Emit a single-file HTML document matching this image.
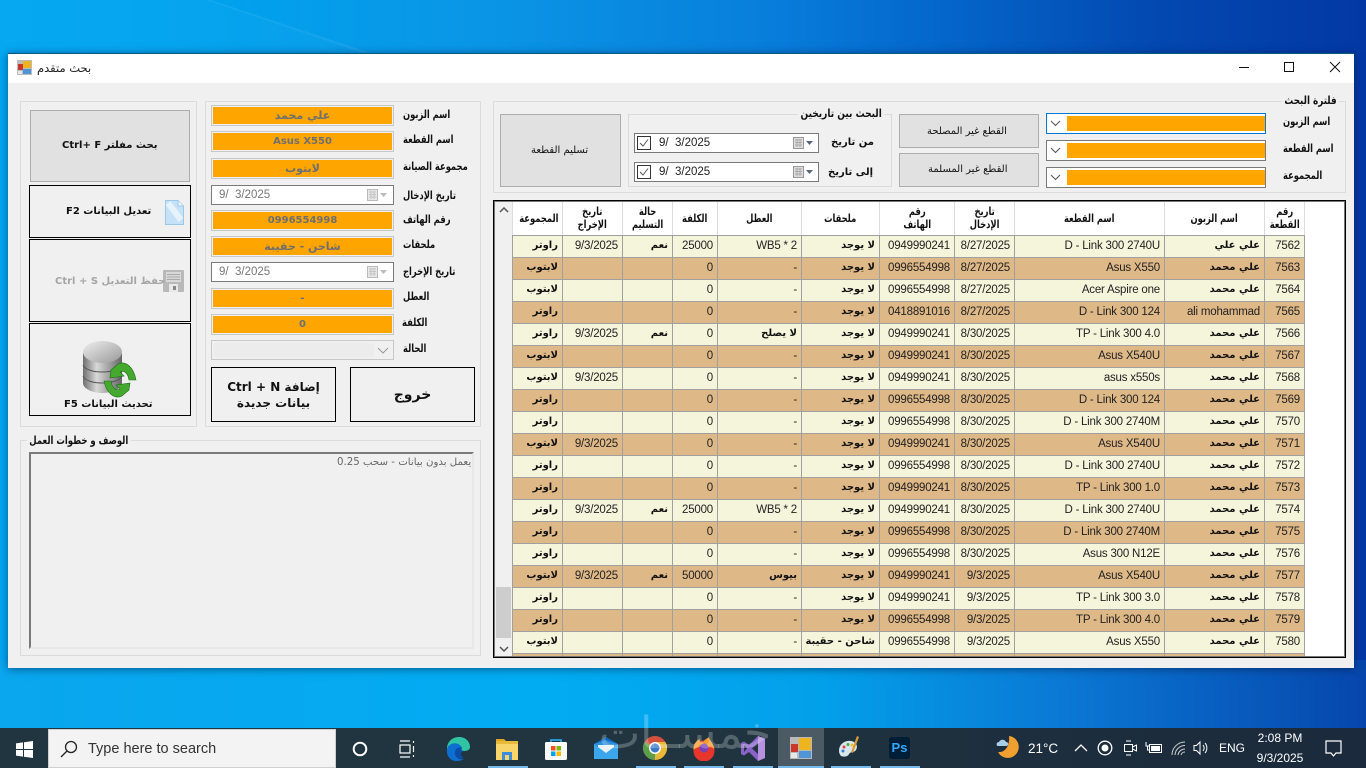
<!DOCTYPE html>
<html lang="ar"><head><meta charset="utf-8"><title>بحث متقدم</title>
<style>
*{box-sizing:border-box}
html,body{margin:0;padding:0;width:1366px;height:768px;overflow:hidden;background:#0a8ae0;font-family:"Liberation Sans","DejaVu Sans",sans-serif}
.a{position:absolute;white-space:nowrap}
.ar{font-family:"DejaVu Sans","Liberation Sans",sans-serif;font-size:10px;font-weight:bold;color:#111;direction:rtl;line-height:14px}
.l{font-size:11px;transform:scaleX(.76);transform-origin:0 50%}
.gb{position:absolute;border:1px solid #dbdbdb}
.leg{position:absolute;background:#f0f0f0;padding:0 3px;white-space:nowrap;font-size:11px;transform-origin:0 50%}
.fld{position:absolute;left:211px;width:183px;height:21px;border:1px solid #c8c8c8;background:#f0f0f0;padding:1px}
.fld div{background:#ffa500;height:100%;margin:0;text-align:center;color:#6f6f6f;font-weight:bold;font-size:11px;line-height:17px;font-family:"DejaVu Sans","Liberation Sans",sans-serif}
.fld div.n{font-size:10px}
.dtd{position:absolute;left:211px;width:183px;height:20px;border:1px solid #7a7a7a;background:#fff;color:#777;font-size:11.5px;line-height:18px;padding-left:7px;white-space:pre}
.dt{position:absolute;left:634px;width:185px;height:20px;border:1px solid #7a7a7a;background:#fff;color:#222;font-size:11.5px;line-height:18px;white-space:pre}
.btn{position:absolute;background:#e1e1e1;border:1px solid #adadad}
.bb{position:absolute;border:1px solid #000;background:#f0f0f0}
.cb{position:absolute;left:1046px;width:220px;height:21px;border:1px solid #7a7a7a;background:#fff}
.cb i{position:absolute;left:20px;right:0;top:2px;bottom:2px;background:#ffa500}
table{position:absolute;left:512px;top:202px;border-collapse:collapse;table-layout:fixed;width:792px;font-size:11.5px;color:#222;letter-spacing:-.2px}
td{border:1px solid #a0a0a0;height:22px;padding:0 4px 0 0;text-align:right;overflow:hidden;white-space:nowrap;line-height:20px}
td.r,td.c,td.s{font-family:"DejaVu Sans","Liberation Sans",sans-serif;font-size:10px;font-weight:bold;color:#111;letter-spacing:0}
tr.y td{background:#f5f5dc}
tr.b td{background:#deb887}
th{background:#fff;border:1px solid #dcdcdc;border-bottom:1px solid #a0a0a0;border-top:0;height:33px;padding:0;font-family:"DejaVu Sans",sans-serif;font-size:11px;font-weight:bold;color:#111;line-height:13px;text-align:center;letter-spacing:0}
th span{display:inline-block;transform:scaleX(.76);white-space:nowrap}
.tb{color:#fff;font-size:12px}
.u{position:absolute;top:766px;height:2px;background:#76b9ed}
</style></head><body>

<!-- wallpaper -->
<div class="a" style="left:0;top:0;width:1366px;height:730px;background:linear-gradient(90deg,#00a6f2 0,#00a2ee 15%,#0a96e6 35%,#0880dc 55%,#0468cc 68%,#0348b0 85%,#0338a4 100%)"></div>
<svg class="a" style="left:0;top:0" width="400" height="56"><polygon points="0,0 206,0 375,56 0,56" fill="#ffffff" opacity=".025"/><polygon points="206,0 211,0 380,56 372,56" fill="#ffffff" opacity=".07"/></svg>
<div class="a" style="left:0;top:660px;width:1366px;height:70px;background:linear-gradient(90deg,#0aa6ee 0,#02acf2 40%,#03a0ea 60%,#0a78d4 78%,#0646ac 100%)"></div>

<!-- window -->
<div class="a" style="left:8px;top:53px;width:1346px;height:615px;background:#f0f0f0;border-top:1px solid #0a5a80;box-shadow:0 1px 8px rgba(0,20,60,.55)">
<div class="a" style="left:0;top:0;width:1346px;height:29px;background:#fff"></div>
</div>

<!-- title -->
<svg class="a" style="left:17px;top:60px" width="15" height="15" viewBox="0 0 15 15"><rect x="0" y="0" width="15" height="15" fill="#bdbdbd"/><rect x="1" y="4" width="5" height="6" fill="#c9372c"/><rect x="6" y="1" width="8" height="7" fill="#eeb420"/><rect x="6" y="9" width="8" height="5" fill="#4f95d8"/><rect x="1" y="11" width="4" height="3" fill="#e8e8e8"/></svg>
<div class="a ar" style="left:37px;top:61px;font-weight:normal;font-size:11.5px;color:#222">بحث متقدم</div>
<svg class="a" style="left:1230px;top:56px" width="120" height="24" viewBox="0 0 120 24" fill="none" stroke="#111" stroke-width="1"><path d="M9 11.5H19"/><rect x="54.5" y="6.5" width="9" height="9"/><path d="M100 6L110 16M110 6L100 16"/></svg>

<!-- left group -->
<div class="gb" style="left:20px;top:101px;width:177px;height:326px"></div>
<div class="btn" style="left:30px;top:110px;width:160px;height:72px;border-width:1.5px"></div>
<div class="a ar" style="left:62px;top:139px;direction:rtl">بحث مفلتر Ctrl+ F</div>

<div class="bb" style="left:29px;top:185px;width:162px;height:53px"></div>
<svg class="a" style="left:165px;top:200px" width="19" height="25" viewBox="0 0 19 25"><path d="M.5 .5H13L18.5 6V24.5H.5Z" fill="#c6e2f7" stroke="#9cc8e8"/><path d="M3 3L16 20" stroke="#e6f3fc" stroke-width="6"/><path d="M13 .5V6H18.5" fill="#eaf5fd" stroke="#9cc8e8"/></svg>
<div class="a ar" style="left:66px;top:205px">تعديل البيانات F2</div>

<div class="bb" style="left:29px;top:239px;width:162px;height:83px"></div>
<svg class="a" style="left:163px;top:270px" width="21" height="22" viewBox="0 0 21 22"><rect width="21" height="22" rx="1" fill="#b9b9b9"/><rect x="3" y="2" width="15" height="10" fill="#d8d8d8"/><path d="M4 4.500H17M4 7H17M4 9.500H17" stroke="#aaa"/><rect x="6" y="14" width="9" height="8" fill="#e8e8e8"/><rect x="10" y="16" width="3" height="4" fill="#888"/></svg>
<div class="a ar" style="left:55px;top:275px;color:#a5a5a5">حفظ التعديل Ctrl + S</div>

<div class="bb" style="left:29px;top:323px;width:162px;height:93px"></div>
<svg class="a" style="left:82px;top:340px" width="56" height="62" viewBox="0 0 56 62">
<defs><linearGradient id="g" x1="0" x2="1"><stop offset="0" stop-color="#6e6e6e"/><stop offset=".35" stop-color="#d8d8d8"/><stop offset="1" stop-color="#666"/></linearGradient><linearGradient id="t" x1="0" x2="1" y1="0" y2="1"><stop offset="0" stop-color="#eee"/><stop offset="1" stop-color="#999"/></linearGradient></defs>
<path d="M1 13V43C1 49 11 53 20 53S40 49 40 43V13Z" fill="url(#g)"/>
<path d="M1 25C3 30 12 32 20 32S38 30 40 25M1 36C3 41 12 43 20 43S38 41 40 36" stroke="#555" fill="none"/>
<ellipse cx="20.500" cy="12" rx="19.500" ry="11" fill="url(#t)"/>
<path d="M29 30L36 24C44 20 52 28 54 40L47 40C46 33 42 30 38 32L42 36L28 38Z" fill="#45a82f" stroke="#1e6d19" stroke-width=".6"/>
<path d="M47 50L40 56C32 60 24 52 22 41L29 41C30 48 34 51 38 49L34 45L48 43Z" fill="#45a82f" stroke="#1e6d19" stroke-width=".6"/>
</svg>
<div class="a ar" style="left:64px;top:398px">تحديث البيانات F5</div>

<!-- middle group -->
<div class="gb" style="left:205px;top:101px;width:276px;height:326px"></div>
<div class="fld" style="top:105px"><div>علي محمد</div></div>
<div class="fld" style="top:131px"><div class="n">Asus X550</div></div>
<div class="fld" style="top:158px"><div>لابتوب</div></div>
<div class="dtd" style="top:185px">9/  3/2025<svg class="a" style="left:155px;top:3px" width="24" height="12" viewBox="0 0 24 12"><rect x=".5" y=".5" width="10" height="11" fill="#e8e8e8" stroke="#bbb"/><path d="M2 3H9M2 5.500H9M2 8H9M4 2V10M7 2V10" stroke="#c4c4c4"/><path d="M13 4H20L16.500 8Z" fill="#bbb"/></svg></div>
<div class="fld" style="top:210px"><div class="n">0996554998</div></div>
<div class="fld" style="top:236px"><div>شاحن - حقيبة</div></div>
<div class="dtd" style="top:262px">9/  3/2025<svg class="a" style="left:155px;top:3px" width="24" height="12" viewBox="0 0 24 12"><rect x=".5" y=".5" width="10" height="11" fill="#e8e8e8" stroke="#bbb"/><path d="M2 3H9M2 5.500H9M2 8H9M4 2V10M7 2V10" stroke="#c4c4c4"/><path d="M13 4H20L16.500 8Z" fill="#bbb"/></svg></div>
<div class="fld" style="top:288px"><div class="n">-</div></div>
<div class="fld" style="top:314px"><div class="n">0</div></div>
<div class="fld" style="top:340px;height:20px"><div style="background:#ececec;width:160px;margin:1px 0 0 1px;height:14px"></div><svg class="a" style="left:165px;top:6px" width="12" height="7" viewBox="0 0 12 7" fill="none" stroke="#999"><path d="M1 1L6 6L11 1"/></svg></div>

<div class="a ar l" style="left:403px;top:108px">اسم الزبون</div>
<div class="a ar l" style="left:403px;top:133px">اسم القطعة</div>
<div class="a ar l" style="left:403px;top:160px">مجموعة الصيانة</div>
<div class="a ar l" style="left:403px;top:189px">تاريخ الإدخال</div>
<div class="a ar l" style="left:403px;top:213px">رقم الهاتف</div>
<div class="a ar l" style="left:403px;top:238px">ملحقات</div>
<div class="a ar l" style="left:403px;top:265px">تاريخ الإخراج</div>
<div class="a ar l" style="left:403px;top:290px">العطل</div>
<div class="a ar l" style="left:402px;top:316px">الكلفة</div>
<div class="a ar l" style="left:403px;top:342px">الحالة</div>

<div class="bb" style="left:211px;top:367px;width:125px;height:55px"></div>
<div class="a ar" style="left:211px;top:379px;width:125px;text-align:center;font-size:12px;line-height:16px;direction:rtl">إضافة Ctrl + N<br>بيانات جديدة</div>
<div class="bb" style="left:350px;top:367px;width:125px;height:55px"></div>
<div class="a ar" style="left:350px;top:386px;width:125px;text-align:center;font-size:14px;line-height:18px">خروج</div>

<!-- description group -->
<div class="gb" style="left:20px;top:440px;width:461px;height:216px"></div>
<div class="leg ar" style="left:27px;top:434px;transform:scaleX(.77)">الوصف و خطوات العمل</div>
<div class="a" style="left:29px;top:452px;width:445px;height:197px;border:2px solid;border-color:#7a7a7a #e8e8e8 #e8e8e8 #7a7a7a;background:#f0f0f0"></div>
<div class="a ar" style="left:337px;top:456px;font-weight:normal;color:#666;direction:rtl;font-size:10.2px">يعمل بدون بيانات - سحب 0.25</div>

<!-- filter group -->
<div class="gb" style="left:493px;top:101px;width:853px;height:92px"></div>
<div class="leg ar" style="left:1282px;top:94px;transform:scaleX(.8)">فلترة البحث</div>

<div class="btn" style="left:500px;top:114px;width:121px;height:73px"></div>
<div class="a ar" style="left:531px;top:144px;font-weight:normal">تسليم القطعة</div>

<div class="gb" style="left:628px;top:114px;width:264px;height:73px"></div>
<div class="leg ar" style="left:798px;top:107px;transform:scaleX(.82)">البحث بين تاريخين</div>
<div class="dt" style="top:133px"><svg class="a" style="left:2px;top:2px" width="14" height="14" viewBox="0 0 14 14"><rect x=".5" y=".5" width="13" height="13" fill="#fff" stroke="#333"/><path d="M3 7L6 10L11 3.500" fill="none" stroke="#555"/></svg><span style="position:absolute;left:24px;top:0">9/  3/2025</span><svg class="a" style="left:158px;top:3px" width="24" height="12" viewBox="0 0 24 12"><rect x=".5" y=".5" width="10" height="11" fill="#ddd" stroke="#999"/><path d="M2 3H9M2 5.500H9M2 8H9M4 2V10M7 2V10" stroke="#aaa"/><path d="M13 4H20L16.500 8Z" fill="#567"/></svg></div>
<div class="dt" style="top:162px"><svg class="a" style="left:2px;top:2px" width="14" height="14" viewBox="0 0 14 14"><rect x=".5" y=".5" width="13" height="13" fill="#fff" stroke="#333"/><path d="M3 7L6 10L11 3.500" fill="none" stroke="#555"/></svg><span style="position:absolute;left:24px;top:0">9/  3/2025</span><svg class="a" style="left:158px;top:3px" width="24" height="12" viewBox="0 0 24 12"><rect x=".5" y=".5" width="10" height="11" fill="#ddd" stroke="#999"/><path d="M2 3H9M2 5.500H9M2 8H9M4 2V10M7 2V10" stroke="#aaa"/><path d="M13 4H20L16.500 8Z" fill="#567"/></svg></div>
<div class="a ar" style="left:831px;top:136px">من تاريخ</div>
<div class="a ar" style="left:828px;top:166px">إلى تاريخ</div>

<div class="btn" style="left:899px;top:114px;width:140px;height:34px"></div>
<div class="a ar" style="left:927px;top:125px;font-weight:normal">القطع غير المصلحة</div>
<div class="btn" style="left:899px;top:153px;width:140px;height:34px"></div>
<div class="a ar" style="left:928px;top:163px;font-weight:normal">القطع غير المسلمة</div>

<div class="cb" style="top:113px;border-color:#0078d7"><i></i><svg class="a" style="left:3px;top:6px" width="11" height="7" viewBox="0 0 11 7" fill="none" stroke="#555"><path d="M1 1L5.500 5.500L10 1"/></svg></div>
<div class="cb" style="top:140px"><i></i><svg class="a" style="left:3px;top:6px" width="11" height="7" viewBox="0 0 11 7" fill="none" stroke="#555"><path d="M1 1L5.500 5.500L10 1"/></svg></div>
<div class="cb" style="top:167px"><i></i><svg class="a" style="left:3px;top:6px" width="11" height="7" viewBox="0 0 11 7" fill="none" stroke="#555"><path d="M1 1L5.500 5.500L10 1"/></svg></div>
<div class="a ar l" style="left:1283px;top:115px">اسم الزبون</div>
<div class="a ar l" style="left:1283px;top:142px">اسم القطعة</div>
<div class="a ar l" style="left:1283px;top:169px">المجموعة</div>

<!-- grid -->
<div class="a" style="left:493px;top:200px;width:853px;height:458px;background:#fff;border:1px solid #000;box-shadow:inset 0 0 0 1px #777;overflow:hidden">
<div class="a" style="left:1px;top:1px;width:17px;height:454px;background:#f0f0f0"></div>
<div class="a" style="left:2px;top:386px;width:15px;height:51px;background:#cdcdcd"></div>
<svg class="a" style="left:5px;top:6px" width="10" height="6" viewBox="0 0 10 6" fill="none" stroke="#555" stroke-width="1.500"><path d="M1 5L5 1L9 5"/></svg>
<svg class="a" style="left:5px;top:445px" width="10" height="6" viewBox="0 0 10 6" fill="none" stroke="#555" stroke-width="1.500"><path d="M1 1L5 5L9 1"/></svg>
</div>
<div class="a" style="left:495px;top:202px;width:849px;height:454px;overflow:hidden">
<table style="left:17px;top:0">
<colgroup><col style="width:50px"><col style="width:60px"><col style="width:50px"><col style="width:45px"><col style="width:84px"><col style="width:78px"><col style="width:75px"><col style="width:60px"><col style="width:150px"><col style="width:100px"><col style="width:40px"></colgroup>
<tr><th><span>المجموعة</span></th><th><span>تاريخ<br>الإخراج</span></th><th><span>حالة<br>التسليم</span></th><th><span>الكلفة</span></th><th><span>العطل</span></th><th><span>ملحقات</span></th><th><span>رقم<br>الهاتف</span></th><th><span>تاريخ<br>الإدخال</span></th><th><span>اسم القطعة</span></th><th><span>اسم الزبون</span></th><th><span>رقم<br>القطعة</span></th></tr>
<tr class="y"><td class="r">راوتر</td><td>9/3/2025</td><td class="s">نعم</td><td>25000</td><td>WB5 * 2</td><td class="r">لا يوجد</td><td>0949990241</td><td>8/27/2025</td><td>D - Link 300 2740U</td><td class="c">علي علي</td><td>7562</td></tr>
<tr class="b"><td class="r">لابتوب</td><td></td><td></td><td>0</td><td>-</td><td class="r">لا يوجد</td><td>0996554998</td><td>8/27/2025</td><td>Asus X550</td><td class="c">علي محمد</td><td>7563</td></tr>
<tr class="y"><td class="r">لابتوب</td><td></td><td></td><td>0</td><td>-</td><td class="r">لا يوجد</td><td>0996554998</td><td>8/27/2025</td><td>Acer Aspire one</td><td class="c">علي محمد</td><td>7564</td></tr>
<tr class="b"><td class="r">راوتر</td><td></td><td></td><td>0</td><td>-</td><td class="r">لا يوجد</td><td>0418891016</td><td>8/27/2025</td><td>D - Link 300 124</td><td>ali mohammad</td><td>7565</td></tr>
<tr class="y"><td class="r">راوتر</td><td>9/3/2025</td><td class="s">نعم</td><td>0</td><td class="r">لا يصلح</td><td class="r">لا يوجد</td><td>0949990241</td><td>8/30/2025</td><td>TP - Link 300 4.0</td><td class="c">علي محمد</td><td>7566</td></tr>
<tr class="b"><td class="r">لابتوب</td><td></td><td></td><td>0</td><td>-</td><td class="r">لا يوجد</td><td>0949990241</td><td>8/30/2025</td><td>Asus X540U</td><td class="c">علي محمد</td><td>7567</td></tr>
<tr class="y"><td class="r">لابتوب</td><td>9/3/2025</td><td></td><td>0</td><td>-</td><td class="r">لا يوجد</td><td>0949990241</td><td>8/30/2025</td><td>asus x550s</td><td class="c">علي محمد</td><td>7568</td></tr>
<tr class="b"><td class="r">راوتر</td><td></td><td></td><td>0</td><td>-</td><td class="r">لا يوجد</td><td>0996554998</td><td>8/30/2025</td><td>D - Link 300 124</td><td class="c">علي محمد</td><td>7569</td></tr>
<tr class="y"><td class="r">راوتر</td><td></td><td></td><td>0</td><td>-</td><td class="r">لا يوجد</td><td>0996554998</td><td>8/30/2025</td><td>D - Link 300 2740M</td><td class="c">علي محمد</td><td>7570</td></tr>
<tr class="b"><td class="r">لابتوب</td><td>9/3/2025</td><td></td><td>0</td><td>-</td><td class="r">لا يوجد</td><td>0949990241</td><td>8/30/2025</td><td>Asus X540U</td><td class="c">علي محمد</td><td>7571</td></tr>
<tr class="y"><td class="r">راوتر</td><td></td><td></td><td>0</td><td>-</td><td class="r">لا يوجد</td><td>0996554998</td><td>8/30/2025</td><td>D - Link 300 2740U</td><td class="c">علي محمد</td><td>7572</td></tr>
<tr class="b"><td class="r">راوتر</td><td></td><td></td><td>0</td><td>-</td><td class="r">لا يوجد</td><td>0949990241</td><td>8/30/2025</td><td>TP - Link 300 1.0</td><td class="c">علي محمد</td><td>7573</td></tr>
<tr class="y"><td class="r">راوتر</td><td>9/3/2025</td><td class="s">نعم</td><td>25000</td><td>WB5 * 2</td><td class="r">لا يوجد</td><td>0949990241</td><td>8/30/2025</td><td>D - Link 300 2740U</td><td class="c">علي محمد</td><td>7574</td></tr>
<tr class="b"><td class="r">راوتر</td><td></td><td></td><td>0</td><td>-</td><td class="r">لا يوجد</td><td>0996554998</td><td>8/30/2025</td><td>D - Link 300 2740M</td><td class="c">علي محمد</td><td>7575</td></tr>
<tr class="y"><td class="r">راوتر</td><td></td><td></td><td>0</td><td>-</td><td class="r">لا يوجد</td><td>0996554998</td><td>8/30/2025</td><td>Asus 300 N12E</td><td class="c">علي محمد</td><td>7576</td></tr>
<tr class="b"><td class="r">لابتوب</td><td>9/3/2025</td><td class="s">نعم</td><td>50000</td><td class="r">بيوس</td><td class="r">لا يوجد</td><td>0949990241</td><td>9/3/2025</td><td>Asus X540U</td><td class="c">علي محمد</td><td>7577</td></tr>
<tr class="y"><td class="r">راوتر</td><td></td><td></td><td>0</td><td>-</td><td class="r">لا يوجد</td><td>0949990241</td><td>9/3/2025</td><td>TP - Link 300 3.0</td><td class="c">علي محمد</td><td>7578</td></tr>
<tr class="b"><td class="r">راوتر</td><td></td><td></td><td>0</td><td>-</td><td class="r">لا يوجد</td><td>0996554998</td><td>9/3/2025</td><td>TP - Link 300 4.0</td><td class="c">علي محمد</td><td>7579</td></tr>
<tr class="y"><td class="r">لابتوب</td><td></td><td></td><td>0</td><td>-</td><td class="r">شاحن - حقيبة</td><td>0996554998</td><td>9/3/2025</td><td>Asus X550</td><td class="c">علي محمد</td><td>7580</td></tr>
<tr class="b"><td></td><td></td><td></td><td></td><td></td><td></td><td></td><td></td><td></td><td></td><td></td></tr>
</table>
</div>

<!-- taskbar -->
<div class="a" style="left:0;top:728px;width:1366px;height:40px;background:linear-gradient(90deg,#20353f 0,#20353f 50%,#1d2e3e 75%,#1b2a3c 100%)"></div>
<div class="a" style="left:778px;top:728px;width:46px;height:40px;background:#4b5a64"></div>
<svg class="a" style="left:16px;top:741px" width="17" height="17" viewBox="0 0 17 17" fill="#fff"><path d="M0 2.400L7 1.400V8H0ZM8 1.200L17 0V8H8ZM0 9H7V15.600L0 14.600ZM8 9H17V17L8 15.800Z"/></svg>
<div class="a" style="left:48px;top:729px;width:288px;height:39px;background:#f3f3f3;border:1px solid #cfcfcf"></div>
<svg class="a" style="left:60px;top:740px" width="18" height="18" viewBox="0 0 18 18" fill="none" stroke="#222" stroke-width="1.300"><circle cx="11" cy="7" r="5.500"/><path d="M7 11L1 17"/></svg>
<div class="a" style="left:88px;top:740px;font-size:14.500px;line-height:18px;color:#333">Type here to search</div>
<svg class="a" style="left:352px;top:741px" width="16" height="16" viewBox="0 0 16 16"><circle cx="8" cy="8" r="6.300" fill="none" stroke="#fff" stroke-width="2"/></svg>
<svg class="a" style="left:399px;top:740px" width="16" height="18" viewBox="0 0 16 18" fill="none" stroke="#fff" stroke-width="1.200"><path d="M1 1H11M1 17H11"/><rect x="1" y="5" width="10" height="8"/><path d="M14.500 1V3M14.500 6V12M14.500 15V17"/></svg>
<!-- edge -->
<svg class="a" style="left:446px;top:737px" width="25" height="24" viewBox="0 0 25 24"><path d="M1 12C1 5 6 0 13 0C20 0 24 5 24 10C24 13 21 14 18 14C15 14 15 12 16 11C14 6 6 6 3 12C2 14 1 14 1 12Z" fill="#2fc5a4"/><path d="M1 12C3 5 13 4 16 11C11 9 9 13 9 16C9 20 13 23 18 22C15 24 12 24 10 24C4 24 0 18 1 12Z" fill="#0c6fd1"/><path d="M9 16C9 12 12 9 16 11C15 12 15 14 18 14C14 15 14 19 18 21C13 23 9 20 9 16Z" fill="#0a4ea8"/></svg>
<!-- folder -->
<svg class="a" style="left:496px;top:738px" width="22" height="22" viewBox="0 0 22 22"><path d="M0 1H8L10 3H0Z" fill="#dca520"/><rect y="3" width="22" height="19" fill="#f8d56a"/><rect y="3" width="22" height="3" fill="#e8b93a"/><rect x="6" y="14" width="10" height="8" fill="#3c8ed8"/><rect x="9" y="17" width="4" height="5" fill="#f8d56a"/></svg>
<!-- store -->
<svg class="a" style="left:545px;top:738px" width="22" height="22" viewBox="0 0 22 22"><path d="M6 4V2H16V4" fill="none" stroke="#29a4ea" stroke-width="1.800"/><rect y="4" width="22" height="18" rx="1.500" fill="#fafafa"/><rect x="6" y="8" width="4.500" height="4.500" fill="#f25022"/><rect x="11.500" y="8" width="4.500" height="4.500" fill="#7fba00"/><rect x="6" y="13.500" width="4.500" height="4.500" fill="#00a4ef"/><rect x="11.500" y="13.500" width="4.500" height="4.500" fill="#ffb900"/></svg>
<!-- mail -->
<svg class="a" style="left:594px;top:737px" width="24" height="22" viewBox="0 0 24 22"><path d="M0 7L12 0L24 7V22H0Z" fill="#2c8fdc"/><path d="M4 8H20V14L12 18L4 14Z" fill="#e8f2fb"/><path d="M0 7V22H24V7L12 16Z" fill="#3ca6ec"/><path d="M0 7L12 0L24 7L12 3Z" fill="#0e62b8"/></svg>
<!-- chrome -->
<svg class="a" style="left:643px;top:736px" width="24" height="24" viewBox="0 0 24 24"><circle cx="12" cy="12" r="12" fill="#d4503e"/><path d="M12 12L1.600 6A12 12 0 0 0 12 24L18 13.600Z" fill="#5d9f48"/><path d="M12 12L12 24A12 12 0 0 0 22.400 6H12Z" fill="#e8b838"/><circle cx="12" cy="12" r="6" fill="#fff"/><circle cx="12" cy="12" r="4.500" fill="#3b79c8"/></svg>
<!-- firefox -->
<svg class="a" style="left:692px;top:737px" width="24" height="24" viewBox="0 0 24 24"><circle cx="12" cy="14" r="10.500" fill="#e8362d"/><path d="M1.500 13C1 7 5 3 8 2C7 5 9 6 11 5C13 2 16 1 17 0C17 3 21 5 22.500 12C19 9 6 8 1.500 13Z" fill="#f89a2c"/><circle cx="12" cy="11" r="4.500" fill="#7a3fb8"/></svg>
<!-- vs -->
<svg class="a" style="left:741px;top:736px" width="24" height="25" viewBox="0 0 24 25"><path d="M0 7L3 5.500L8 9L17 0L24 3V22L17 25L8 16L3 19.500L0 18ZM3 9V16L6 12.500ZM17 7L11 12.500L17 18Z" fill="#8a62c8"/><path d="M17 0L24 3V22L17 25Z" fill="#b592e0"/></svg>
<!-- app -->
<svg class="a" style="left:790px;top:737px" width="22" height="22" viewBox="0 0 22 22"><rect width="22" height="22" fill="#b9b9b9"/><rect x="1" y="7" width="7" height="8" fill="#c9372c"/><rect x="9" y="1" width="12" height="12" fill="#eeb420"/><rect x="9" y="14" width="12" height="7" fill="#4f95d8"/><rect x="1" y="16" width="6" height="5" fill="#e8e8e8"/></svg>
<!-- palette -->
<svg class="a" style="left:838px;top:736px" width="24" height="24" viewBox="0 0 24 24"><path d="M1 15C1 8 7 4 13 5C19 6 20 11 18 14C16 17 13 15 11 18C10 21 5 21 3 20C2 19 1 17 1 15Z" fill="#d9e6ec"/><circle cx="6" cy="11" r="1.500" fill="#e04040"/><circle cx="10" cy="8.500" r="1.500" fill="#3fae49"/><circle cx="5" cy="15" r="1.500" fill="#3a80d8"/><circle cx="14" cy="9" r="1.500" fill="#f0c030"/><path d="M21 1L15 17L13 16L19 0Z" fill="#d99a3a"/></svg>
<!-- PS -->
<div class="a" style="left:889px;top:737px;width:21px;height:22px;background:#001e36;border-radius:3px;color:#31a8ff;font-size:13px;font-weight:bold;text-align:center;line-height:21px">Ps</div>

<div class="u" style="left:488px;width:40px"></div>
<div class="u" style="left:636px;width:40px"></div>
<div class="u" style="left:684px;width:40px"></div>
<div class="u" style="left:733px;width:40px"></div>
<div class="u" style="left:778px;width:46px"></div>
<div class="u" style="left:831px;width:40px"></div>
<div class="u" style="left:880px;width:40px"></div>

<!-- watermark -->
<div class="a" style="left:590px;top:704px;width:190px;text-align:center;font-family:'DejaVu Sans',sans-serif;font-size:44px;line-height:60px;color:rgba(255,255,255,.24)">خمســات</div>

<!-- tray -->
<svg class="a" style="left:995px;top:735px" width="26" height="26" viewBox="0 0 26 26"><path d="M14 1A11 11 0 1 1 3 17C10 18 15 11 14 1Z" fill="#f0a030"/><path d="M3 11C1 11 1 7 4 7C5 4 10 4 11 7C14 7 14 11 11 11Z" fill="#a8cfe8"/></svg>
<div class="a tb" style="left:1028px;top:740px;font-size:13.500px;line-height:18px">21°C</div>
<svg class="a" style="left:1074px;top:743px" width="14" height="9" viewBox="0 0 14 9" fill="none" stroke="#fff" stroke-width="1.300"><path d="M1 8L7 2L13 8"/></svg>
<svg class="a" style="left:1097px;top:740px" width="16" height="16" viewBox="0 0 16 16"><circle cx="8" cy="8" r="6.800" fill="none" stroke="#fff" stroke-width="1.300"/><circle cx="8" cy="8" r="3.500" fill="#fff"/></svg>
<svg class="a" style="left:1123px;top:739px" width="15" height="18" viewBox="0 0 15 18" fill="none" stroke="#fff"><rect x="1.500" y="5.500" width="8" height="7"/><path d="M9.500 8L13.500 6V12L9.500 10M3 2H8M3 16H8"/></svg>
<svg class="a" style="left:1145px;top:741px" width="17" height="14" viewBox="0 0 17 14" fill="none" stroke="#fff"><rect x="4.500" y="3.500" width="12" height="8"/><rect x="6" y="5" width="9" height="5" fill="#fff" stroke="none"/><path d="M1 1V5H4M2.500 5V9H4"/></svg>
<svg class="a" style="left:1171px;top:741px" width="15" height="15" viewBox="0 0 15 15" fill="none" stroke="#ccc"><path d="M1 14A13 13 0 0 1 14 1M4 14A10 10 0 0 1 14 4.500M7 14A7 7 0 0 1 14 8M10 14A4 4 0 0 1 14 11"/></svg>
<svg class="a" style="left:1193px;top:740px" width="16" height="16" viewBox="0 0 16 16" fill="none" stroke="#fff"><path d="M1 5.500H3.500L7 2V14L3.500 10.500H1ZM10 5C11.500 7 11.500 9 10 11M12 3C14.500 6 14.500 10 12 13"/></svg>
<div class="a tb" style="left:1219px;top:741px;line-height:14px">ENG</div>
<div class="a tb" style="left:1250px;top:731px;width:60px;text-align:center;line-height:15px">2:08 PM</div>
<div class="a tb" style="left:1250px;top:751px;width:60px;text-align:center;line-height:15px">9/3/2025</div>
<svg class="a" style="left:1325px;top:740px" width="17" height="17" viewBox="0 0 17 17" fill="none" stroke="#fff" stroke-width="1.200"><path d="M1 1H16V13H11L8.500 16L6 13H1Z"/></svg>
</body></html>
